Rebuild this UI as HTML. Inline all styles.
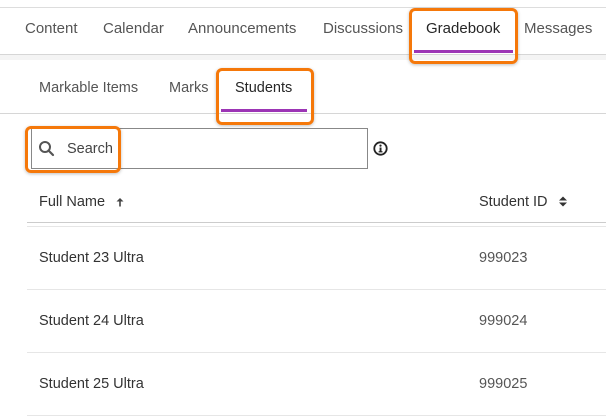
<!DOCTYPE html>
<html><head><style>
body{margin:0;width:606px;height:419px;background:#fff;font-family:"Liberation Sans",sans-serif;position:relative;overflow:hidden}
.a{position:absolute;white-space:nowrap}
.nav{font-size:15px;color:#555;top:20px}
.sub{font-size:14.5px;color:#555;top:80px}
.hl{position:absolute;background:#ddd;height:1px}
.ob{position:absolute;border:3px solid #f5780a;border-radius:6px;box-sizing:border-box;box-shadow:0 1px 3px rgba(0,0,0,.25)}
.row{font-size:14.5px;color:#333}
</style></head><body>
<div class="hl" style="left:0;top:7px;width:606px"></div>
<div class="a nav" style="left:25px">Content</div>
<div class="a nav" style="left:103px">Calendar</div>
<div class="a nav" style="left:188px">Announcements</div>
<div class="a nav" style="left:323px">Discussions</div>
<div class="a nav" style="left:426px;color:#262626">Gradebook</div>
<div class="a nav" style="left:524px">Messages</div>
<div style="position:absolute;left:414px;top:50px;width:99px;height:3px;background:#9c35b5"></div>
<div class="hl" style="left:0;top:54px;width:606px;background:#d6d6d6"></div>
<div style="position:absolute;left:0;top:55px;width:606px;height:5px;background:#f4f4f4"></div>
<div class="ob" style="left:409px;top:8px;width:109px;height:56px"></div>

<div class="a sub" style="left:39px">Markable Items</div>
<div class="a sub" style="left:169px">Marks</div>
<div class="a sub" style="left:235px;color:#262626">Students</div>
<div style="position:absolute;left:221px;top:109px;width:86px;height:3px;background:#9c35b5"></div>
<div class="hl" style="left:0;top:113px;width:606px;background:#d6d6d6"></div>
<div class="ob" style="left:216px;top:68px;width:98px;height:57px"></div>

<div style="position:absolute;left:31px;top:128px;width:337px;height:41px;border:1px solid #888;box-sizing:border-box"></div>
<svg class="a" style="left:38px;top:140px" width="18" height="18" viewBox="0 0 18 18"><circle cx="7" cy="7" r="5" fill="none" stroke="#555" stroke-width="2"/><line x1="10.5" y1="10.5" x2="15" y2="15" stroke="#555" stroke-width="2.2" stroke-linecap="round"/></svg>
<div class="a" style="left:67px;top:141px;font-size:14.5px;color:#444">Search</div>
<div class="ob" style="left:25px;top:126px;width:96px;height:47px"></div>
<svg class="a" style="left:373px;top:141px" width="15" height="15" viewBox="0 0 15 15"><circle cx="7.5" cy="7.5" r="6.2" fill="none" stroke="#222" stroke-width="1.8"/><circle cx="7.5" cy="4.6" r="1.1" fill="#222"/><rect x="6.6" y="6.5" width="1.9" height="4.5" fill="#222"/><rect x="5.6" y="10.2" width="3.9" height="1.2" fill="#222"/></svg>

<div class="a row" style="left:39px;top:194px">Full Name</div>
<svg class="a" style="left:116px;top:197px" width="8" height="10" viewBox="0 0 8 10"><path d="M0.5 4.5L4 1L7.5 4.5Z" fill="#444"/><rect x="3.2" y="3.5" width="1.6" height="6" fill="#444"/></svg>
<div class="a row" style="left:479px;top:194px">Student ID</div>
<svg class="a" style="left:558px;top:195px" width="10" height="13" viewBox="0 0 10 13"><path d="M1 5.5L5 1.5L9 5.5Z M1 7.5L5 11.5L9 7.5Z" fill="#333"/></svg>
<div class="hl" style="left:27px;top:222px;width:579px;background:#ccc;height:1px"></div>
<div class="hl" style="left:27px;top:226px;width:579px;background:#e6e6e6"></div>

<div class="a row" style="left:39px;top:250px">Student 23 Ultra</div>
<div class="a row" style="left:479px;top:250px;color:#555">999023</div>
<div class="hl" style="left:27px;top:289px;width:579px;background:#e6e6e6"></div>
<div class="a row" style="left:39px;top:313px">Student 24 Ultra</div>
<div class="a row" style="left:479px;top:313px;color:#555">999024</div>
<div class="hl" style="left:27px;top:352px;width:579px;background:#e6e6e6"></div>
<div class="a row" style="left:39px;top:376px">Student 25 Ultra</div>
<div class="a row" style="left:479px;top:376px;color:#555">999025</div>
<div class="hl" style="left:27px;top:415px;width:579px;background:#e6e6e6"></div>
</body></html>
